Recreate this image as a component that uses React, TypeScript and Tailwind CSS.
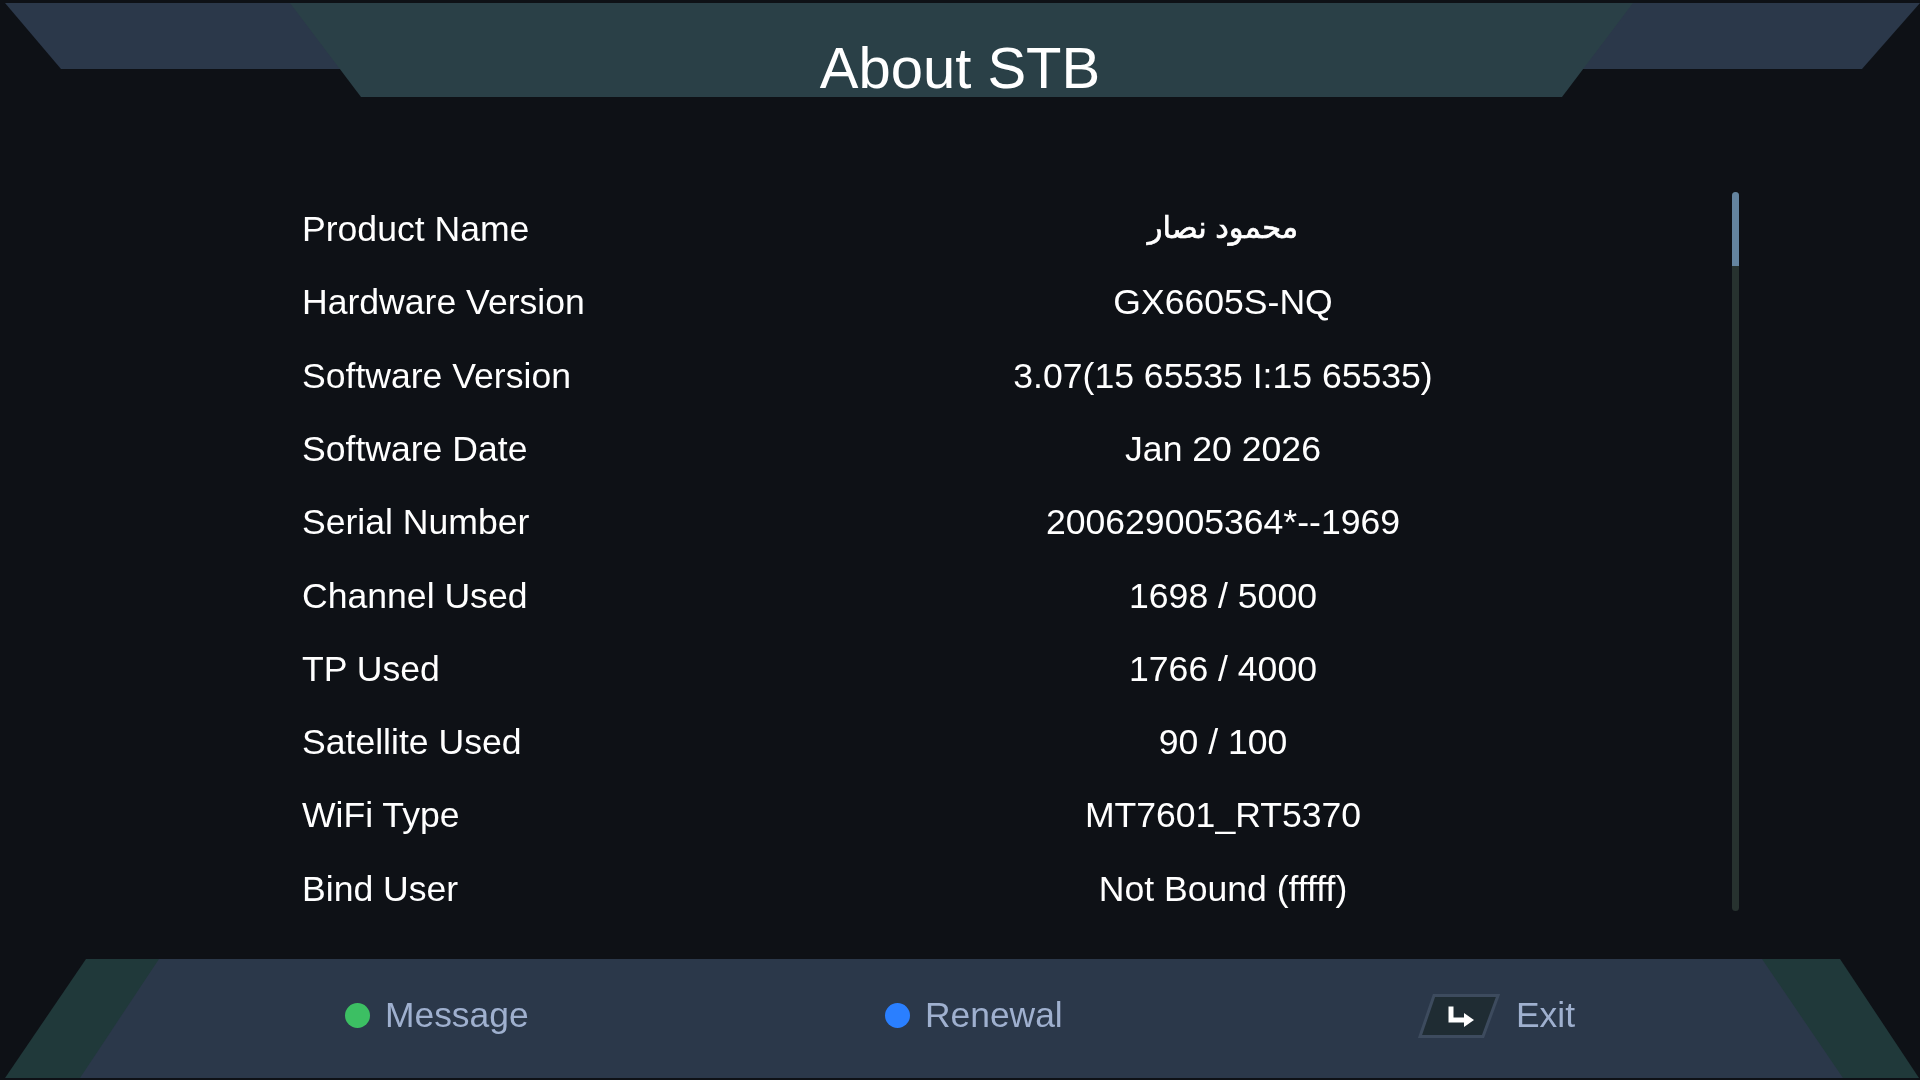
const rows = [
  { label: "Product Name", value: "محمود نصار", valueClass: "text-[30.5px] pb-[4px] [-webkit-text-stroke:0.7px_white]" },
  { label: "Hardware Version", value: "GX6605S-NQ", valueClass: "" },
  { label: "Software Version", value: "3.07(15 65535 I:15 65535)", valueClass: "" },
  { label: "Software Date", value: "Jan 20 2026", valueClass: "" },
  { label: "Serial Number", value: "200629005364*--1969", valueClass: "" },
  { label: "Channel Used", value: "1698 / 5000", valueClass: "" },
  { label: "TP Used", value: "1766 / 4000", valueClass: "" },
  { label: "Satellite Used", value: "90 / 100", valueClass: "" },
  { label: "WiFi Type", value: "MT7601_RT5370", valueClass: "" },
  { label: "Bind User", value: "Not Bound (fffff)", valueClass: "" },
];

function ExitKey() {
  return (
    <svg width="82" height="44" viewBox="0 0 82 44" className="shrink-0">
      <polygon points="16,1.5 80,1.5 65,42.5 2,42.5" fill="#1f2c33" stroke="#3d4b5e" strokeWidth="3" />
      <path d="M33 12.5 V26 H47" fill="none" stroke="#ffffff" strokeWidth="5" />
      <polygon points="46,19 56,26 46,33" fill="#ffffff" />
    </svg>
  );
}

export default function App() {
  return (
    <div
      className="w-[1920px] h-[1080px] overflow-hidden flex flex-col bg-[#0e1116] text-white blur-[0.4px]"
      style={{ fontFamily: '"Liberation Sans", "DejaVu Sans", sans-serif' }}
    >
      {/* title band */}
      <header className="grid h-[97px] shrink-0 pt-[3px]">
        <div className="col-start-1 row-start-1 self-start h-[66px] bg-[#2b384a] [clip-path:polygon(5px_0,1920px_0,1862px_100%,61px_100%)]" />
        <div className="col-start-1 row-start-1 justify-self-start ml-[290px] w-[1343px] h-[94px] flex items-center justify-center pt-[36px] pr-[3px] bg-[#2a4047] [clip-path:polygon(0_0,100%_0,1272px_100%,71px_100%)]">
          <h1 className="text-[58px] leading-none font-normal">About STB</h1>
        </div>
      </header>

      {/* info list */}
      <main className="flex-1 flex pl-[302px] pt-[96px]">
        <div className="w-[1298px]">
          {rows.map((row) => (
            <div key={row.label} className="grid grid-cols-[544px_754px] items-center h-[73.33px] text-[35.6px] leading-none">
              <span>{row.label}</span>
              <span className={`text-center ${row.valueClass}`}>{row.value}</span>
            </div>
          ))}
        </div>
        <div className="ml-[132px] w-[7px] h-[719px] -mt-[1px] rounded-full bg-[#27322f] overflow-hidden">
          <div className="h-[74px] bg-[#64849f]" />
        </div>
      </main>

      {/* colour key hints */}
      <footer className="h-[119px] shrink-0 mb-[2px] bg-[#20393a] [clip-path:polygon(86px_0,1840px_0,1919px_100%,5px_100%)]">
        <div className="h-full flex items-center pl-[345px] pb-[6px] bg-[#2b384a] text-[#9fb0cf] text-[35.4px] leading-none [clip-path:polygon(159px_0,1762px_0,1843px_100%,80px_100%)]">
          <div className="w-[540px] flex items-center gap-[15px]">
            <span className="w-[25px] h-[25px] rounded-full bg-[#3cbf63]" />
            <span>Message</span>
          </div>
          <div className="w-[533px] flex items-center gap-[15px]">
            <span className="w-[25px] h-[25px] rounded-full bg-[#2a7fff]" />
            <span>Renewal</span>
          </div>
          <div className="flex items-center gap-[16px]">
            <ExitKey />
            <span>Exit</span>
          </div>
        </div>
      </footer>
    </div>
  );
}
